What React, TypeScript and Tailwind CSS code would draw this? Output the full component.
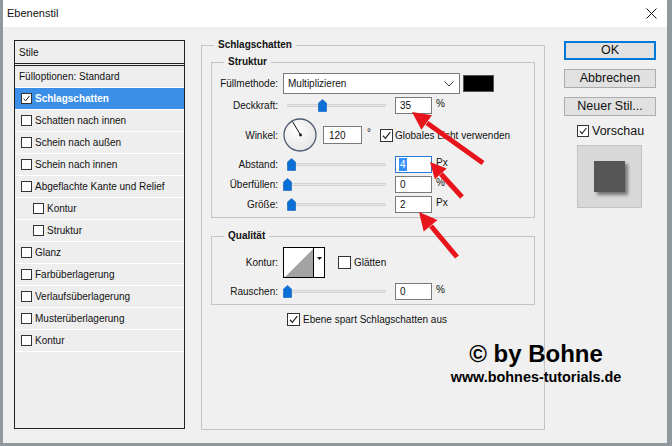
import React from "react";

type Row = { label: string; sub?: boolean };

const rows: Row[] = [
  { label: "Schatten nach innen" },
  { label: "Schein nach außen" },
  { label: "Schein nach innen" },
  { label: "Abgeflachte Kante und Relief" },
  { label: "Kontur", sub: true },
  { label: "Struktur", sub: true },
  { label: "Glanz" },
  { label: "Farbüberlagerung" },
  { label: "Verlaufsüberlagerung" },
  { label: "Musterüberlagerung" },
  { label: "Kontur" },
];

function Check({ checked, className }: { checked?: boolean; className: string }) {
  return (
    <span className={`shrink-0 inline-flex items-center justify-center border border-[#333] bg-white ${className}`}>
      {checked && (
        <svg viewBox="0 0 10 10" className="w-full h-full">
          <path d="M1.8 5.2 L4 7.6 L8.4 2" fill="none" stroke="#222" strokeWidth="1.1" />
        </svg>
      )}
    </span>
  );
}

function Slider({ pos }: { pos: number }) {
  return (
    <div className="relative ml-[5px] w-[108px] h-[14px] flex items-center pl-[4px] pr-[5px]">
      <div className="flex-1 h-[3px] border-y border-[#d2d2d2] bg-[#e8e8e8]" />
      <svg width="9" height="13" viewBox="0 0 9 13" className="absolute top-[1px]" style={{ left: pos }}>
        <path d="M4.5 0.5 L8.5 4 L8.5 12.5 L0.5 12.5 L0.5 4 Z" fill="#0b6fd8" stroke="#0a5cb5" strokeWidth="0.6" />
      </svg>
    </div>
  );
}

function Field({ value, unit, focus }: { value: string; unit: string; focus?: boolean }) {
  return (
    <>
      <div
        className={`ml-[4px] w-[37px] h-[17px] bg-white flex items-center pl-[3px] border ${
          focus ? "border-[#2a78d4]" : "border-[#7a7a7a]"
        }`}
      >
        {focus ? <span className="bg-[#3390ff] text-white px-[1px] leading-[13px]">{value}</span> : <span className="pl-[1px]">{value}</span>}
      </div>
      <span className="ml-[4px] -mt-[4px]">{unit}</span>
    </>
  );
}

function Label({ text }: { text: string }) {
  return <span className="w-[66px] shrink-0 text-right">{text}</span>;
}

function StylesList() {
  return (
    <div className="mt-[1px] w-[171px] h-[389px] border border-[#222] bg-[#eeeeee] flex flex-col">
      <div className="h-[22px] flex items-center pl-[4px]">Stile</div>
      <div className="h-[3px] border-t border-[#222] border-b border-[#8a8a8a]" />
      <div className="h-[22px] border-b border-white flex items-center pl-[4px]">Fülloptionen: Standard</div>
      <div className="h-[22px] border-b border-white bg-[#3b8fe7] flex items-center pl-[6px]">
        <Check checked className="w-[11px] h-[11px]" />
        <span className="ml-[3px] font-bold text-white">Schlagschatten</span>
      </div>
      {rows.map((r, i) => (
        <div key={i} className={`h-[22px] border-b border-white flex items-center ${r.sub ? "pl-[18px]" : "pl-[6px]"}`}>
          <Check className="w-[11px] h-[11px]" />
          <span className="ml-[3px]">{r.label}</span>
        </div>
      ))}
    </div>
  );
}

function Settings() {
  return (
    <fieldset className="ml-[16px] w-[344px] h-[391px] border border-[#c4c4c4] p-0 m-0">
      <legend className="ml-[12px] px-[4px] font-bold leading-[12px]">Schlagschatten</legend>
      <div className="px-[9px] flex flex-col">
        <fieldset className="mt-[5px] border border-[#c4c4c4] p-0 m-0">
          <legend className="ml-[12px] px-[4px] font-bold leading-[12px]">Struktur</legend>
          <div className="flex flex-col pb-[3px]">
            <div className="mt-[5px] h-[21px] flex items-center">
              <Label text="Füllmethode:" />
              <div className="ml-[5px] w-[177px] h-[21px] border border-[#7a7a7a] bg-white flex items-center justify-between pl-[4px] pr-[5px]">
                <span>Multiplizieren</span>
                <svg width="10" height="6" viewBox="0 0 10 6">
                  <path d="M0.5 0.5 L5 5 L9.5 0.5" fill="none" stroke="#444" strokeWidth="1" />
                </svg>
              </div>
              <div className="ml-[3px] w-[31px] h-[17px] bg-black border border-[#555]" />
            </div>
            <div className="mt-[1px] h-[20px] flex items-center">
              <Label text="Deckkraft:" />
              <Slider pos={35} />
              <Field value="35" unit="%" />
            </div>
            <div className="mt-[2px] h-[36px] flex items-center">
              <Label text="Winkel:" />
              <svg width="34" height="34" viewBox="0 0 34 34" className="ml-[5px] shrink-0">
                <defs>
                  <radialGradient id="dial" cx="0.4" cy="0.35" r="0.7">
                    <stop offset="0" stopColor="#ffffff" />
                    <stop offset="1" stopColor="#e4e4e4" />
                  </radialGradient>
                </defs>
                <circle cx="17" cy="17" r="16" fill="url(#dial)" stroke="#4e5a72" strokeWidth="1.3" />
                <line x1="17.5" y1="17" x2="9.5" y2="3.5" stroke="#111" strokeWidth="1" />
                <circle cx="17.5" cy="17" r="1.4" fill="#111" />
              </svg>
              <div className="ml-[6px] w-[39px] h-[18px] bg-white border border-[#7a7a7a] flex items-center pl-[5px]">120</div>
              <span className="ml-[5px] -mt-[6px]">°</span>
              <Check checked className="ml-[9px] w-[13px] h-[13px]" />
              <span className="ml-[2px]">Globales Licht verwenden</span>
            </div>
            <div className="mt-[1px] h-[20px] flex items-center">
              <Label text="Abstand:" />
              <Slider pos={4} />
              <Field value="4" unit="Px" focus />
            </div>
            <div className="h-[20px] flex items-center">
              <Label text="Überfüllen:" />
              <Slider pos={0} />
              <Field value="0" unit="%" />
            </div>
            <div className="h-[20px] flex items-center">
              <Label text="Größe:" />
              <Slider pos={4} />
              <Field value="2" unit="Px" />
            </div>
          </div>
        </fieldset>
        <fieldset className="mt-[12px] border border-[#c4c4c4] p-0 m-0">
          <legend className="ml-[12px] px-[4px] font-bold leading-[12px]">Qualität</legend>
          <div className="flex flex-col pb-[3px]">
            <div className="mt-[5px] h-[31px] flex items-center">
              <Label text="Kontur:" />
              <div className="ml-[5px] w-[42px] h-[31px] border border-black bg-white flex">
                <svg width="29" height="29" viewBox="0 0 29 29" className="shrink-0">
                  <polygon points="1,29 29,1 29,29" fill="#a3a3a3" />
                </svg>
                <div className="flex-1 border-l border-black flex justify-center pt-[9px]">
                  <svg width="5" height="3" viewBox="0 0 5 3">
                    <polygon points="0,0 5,0 2.5,3" fill="#111" />
                  </svg>
                </div>
              </div>
              <Check className="ml-[13px] w-[13px] h-[13px]" />
              <span className="ml-[3px]">Glätten</span>
            </div>
            <div className="mt-[3px] h-[20px] flex items-center">
              <Label text="Rauschen:" />
              <Slider pos={0} />
              <Field value="0" unit="%" />
            </div>
          </div>
        </fieldset>
        <div className="mt-[4px] h-[20px] flex items-center pl-[76px]">
          <Check checked className="w-[13px] h-[13px]" />
          <span className="ml-[3px]">Ebene spart Schlagschatten aus</span>
        </div>
      </div>
    </fieldset>
  );
}

function Actions() {
  const btn = "h-[19px] w-[92px] bg-[#e1e1e1] flex items-center justify-center text-[12.5px]";
  return (
    <div className="ml-[19px] mt-[2px] flex flex-col">
      <div className={`${btn} border border-[#0078d7] shadow-[inset_0_0_0_1px_#0078d7]`}>OK</div>
      <div className={`${btn} mt-[9px] border border-[#adadad]`}>Abbrechen</div>
      <div className={`${btn} mt-[9px] border border-[#adadad]`}>Neuer Stil...</div>
      <div className="mt-[5px] h-[20px] flex items-center pl-[13px]">
        <Check checked className="w-[12px] h-[12px]" />
        <span className="ml-[3px] text-[12.5px]">Vorschau</span>
      </div>
      <div className="mt-[4px] ml-[13px] w-[65px] h-[63px] bg-[#d8d8d8] border border-[#c2c2c2] flex items-center justify-center">
        <div className="w-[31px] h-[31px] bg-[#565656] shadow-[3px_3px_3px_rgba(0,0,0,0.45)]" />
      </div>
    </div>
  );
}

function Arrows() {
  const red = "#e8141c";
  return (
    <svg width="672" height="446" className="absolute -left-[3px] top-0 pointer-events-none">
      <line x1="483" y1="163" x2="427" y2="123" stroke={red} strokeWidth="5" />
      <polygon points="412,112 431.9,115.2 421.4,129.8" fill={red} />
      <line x1="462" y1="197" x2="441" y2="174" stroke={red} strokeWidth="5" />
      <polygon points="430,162 446.7,168.4 434.9,179.2" fill={red} />
      <line x1="457" y1="257" x2="431" y2="226" stroke={red} strokeWidth="5" />
      <polygon points="419,212 437.5,220 423.7,231.6" fill={red} />
    </svg>
  );
}

export default function App() {
  return (
    <div className="relative w-[672px] h-[446px] flex flex-col overflow-hidden bg-[#f0f0f0] border-l-[3px] border-r-[5px] border-b-[3px] border-[#8f989d] text-[10px] text-[#111] [font-family:'Liberation_Sans',Arial,sans-serif]">
      <div className="h-[27px] shrink-0 bg-white flex items-center justify-between pl-[4px] pr-[10px]">
        <span className="text-[11px]">Ebenenstil</span>
        <svg width="11" height="11" viewBox="0 0 11 11">
          <path d="M0.5 0.5 L10.5 10.5 M10.5 0.5 L0.5 10.5" stroke="#111" strokeWidth="1" />
        </svg>
      </div>
      <div className="flex-1 flex pl-[11px] pt-[12px]">
        <StylesList />
        <Settings />
        <Actions />
      </div>
      <Arrows />
      <div className="absolute left-[433px] top-[342px] w-[200px] flex flex-col items-center font-bold text-black">
        <span className="text-[24px] leading-[24px]">© by Bohne</span>
        <span className="mt-[4px] text-[14.4px] leading-[14px]">www.bohnes-tutorials.de</span>
      </div>
    </div>
  );
}
